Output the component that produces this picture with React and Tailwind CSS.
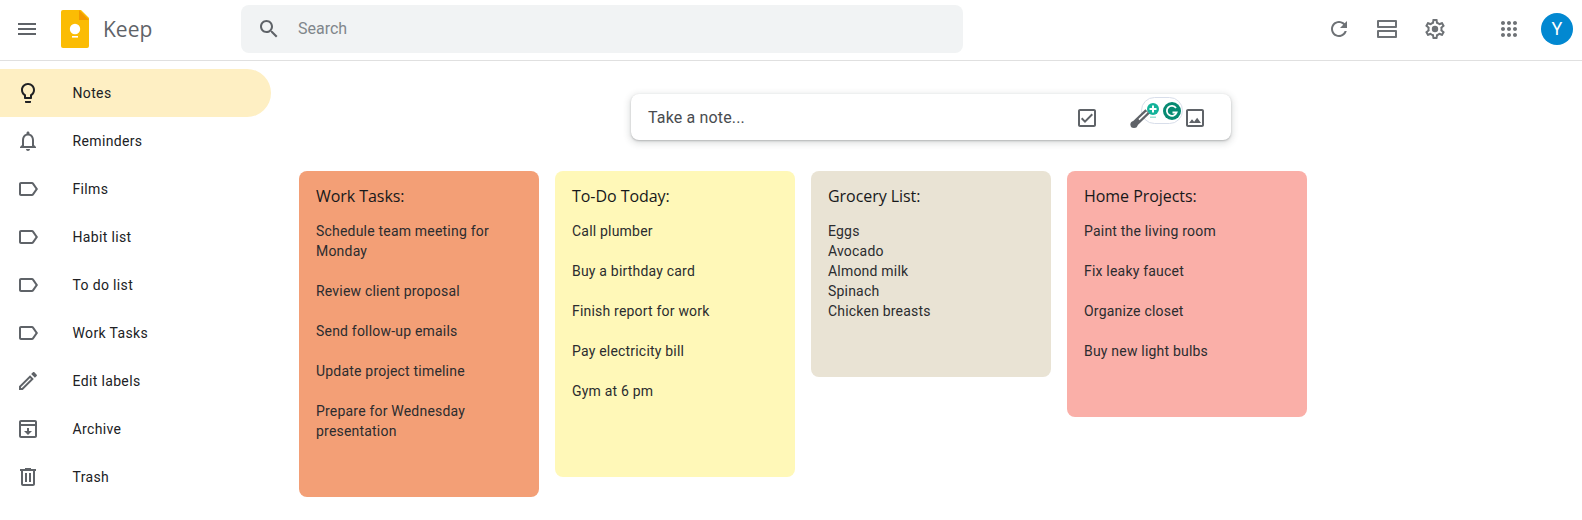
const P = {
  menu: "M3 18h18v-2H3v2zm0-5h18v-2H3v2zm0-7v2h18V6H3z",
  search: "M15.5 14h-.79l-.28-.27C15.41 12.59 16 11.11 16 9.5 16 5.91 13.09 3 9.5 3S3 5.91 3 9.5 5.91 16 9.5 16c1.61 0 3.09-.59 4.23-1.57l.27.28v.79l5 4.99L20.49 19l-4.99-5zm-6 0C7.01 14 5 11.99 5 9.5S7.01 5 9.5 5 14 7.01 14 9.5 11.99 14 9.5 14z",
  refresh: "M17.65 6.35C16.2 4.9 14.21 4 12 4c-4.42 0-7.99 3.58-7.99 8s3.57 8 7.99 8c3.73 0 6.84-2.55 7.73-6h-2.08c-.82 2.33-3.04 4-5.65 4-3.31 0-6-2.69-6-6s2.69-6 6-6c1.66 0 3.14.69 4.22 1.78L13 11h7V4l-2.35 2.35z",
  split: "M3 3h18a1 1 0 0 1 1 1v6a1 1 0 0 1-1 1H3a1 1 0 0 1-1-1V4a1 1 0 0 1 1-1zm1 2v4h16V5H4zM3 13h18a1 1 0 0 1 1 1v6a1 1 0 0 1-1 1H3a1 1 0 0 1-1-1v-6a1 1 0 0 1 1-1zm1 2v4h16v-4H4z",
  gear: "M19.43 12.98c.04-.32.07-.64.07-.98s-.03-.66-.07-.98l2.11-1.65c.19-.15.24-.42.12-.64l-2-3.46c-.12-.22-.39-.3-.61-.22l-2.49 1c-.52-.4-1.08-.73-1.69-.98l-.38-2.65C14.46 2.18 14.25 2 14 2h-4c-.25 0-.46.18-.49.42l-.38 2.65c-.61.25-1.17.59-1.69.98l-2.49-1c-.23-.09-.49 0-.61.22l-2 3.46c-.13.22-.07.49.12.64l2.11 1.65c-.04.32-.07.65-.07.98s.03.66.07.98l-2.11 1.65c-.19.15-.24.42-.12.64l2 3.46c.12.22.39.3.61.22l2.49-1c.52.4 1.08.73 1.69.98l.38 2.65c.03.24.24.42.49.42h4c.25 0 .46-.18.49-.42l.38-2.65c.61-.25 1.17-.59 1.69-.98l2.49 1c.23.09.49 0 .61-.22l2-3.46c.12-.22.07-.49-.12-.64l-2.11-1.65zm-1.98-1.71c.04.31.05.52.05.73 0 .21-.02.43-.05.73l-.14 1.13.89.7 1.08.84-.7 1.21-1.27-.51-1.04-.42-.9.68c-.43.32-.84.56-1.25.73l-1.06.43-.16 1.13-.2 1.35h-1.4l-.19-1.35-.16-1.13-1.06-.43c-.43-.18-.83-.41-1.23-.71l-.91-.7-1.06.43-1.27.51-.7-1.21 1.08-.84.89-.7-.14-1.13c-.03-.31-.05-.54-.05-.74s.02-.43.05-.73l.14-1.13-.89-.7-1.08-.84.7-1.21 1.27.51 1.04.42.9-.68c.43-.32.84-.56 1.25-.73l1.06-.43.16-1.13.2-1.35h1.39l.19 1.35.16 1.13 1.06.43c.43.18.83.41 1.23.71l.91.7 1.06-.43 1.27-.51.7 1.21-1.07.85-.89.7.14 1.13z",
  bulb: "M9 21c0 .55.45 1 1 1h4c.55 0 1-.45 1-1v-1H9v1zm3-19C8.14 2 5 5.14 5 9c0 2.38 1.19 4.47 3 5.74V17c0 .55.45 1 1 1h6c.55 0 1-.45 1-1v-2.26c1.81-1.27 3-3.36 3-5.74 0-3.86-3.14-7-7-7zm2.85 11.1l-.85.6V16h-4v-2.3l-.85-.6C7.8 12.16 7 10.63 7 9c0-2.76 2.24-5 5-5s5 2.24 5 5c0 1.63-.8 3.16-2.15 4.1z",
  bell: "M12 22c1.1 0 2-.9 2-2h-4c0 1.1.9 2 2 2zm6-6v-5c0-3.07-1.63-5.64-4.5-6.32V4c0-.83-.67-1.5-1.5-1.5s-1.5.67-1.5 1.5v.68C7.64 5.36 6 7.92 6 11v5l-2 2v1h16v-1l-2-2zm-2 1H8v-6c0-2.48 1.51-4.5 4-4.5s4 2.02 4 4.5v6z",
  label: "M17.63 5.84C17.27 5.33 16.67 5 16 5L5 5.01C3.9 5.01 3 5.9 3 7v10c0 1.1.9 1.99 2 1.99L16 19c.67 0 1.27-.33 1.63-.84L22 12l-4.37-6.16zM16 17H5V7h11l3.55 5L16 17z",
  edit: "M14.06 9.02l.92.92L5.92 19H5v-.92l9.06-9.06M17.66 3c-.25 0-.51.1-.7.29l-1.83 1.83 3.75 3.75 1.83-1.83c.39-.39.39-1.02 0-1.41l-2.34-2.34c-.2-.2-.45-.29-.71-.29zm-3.6 3.19L3 17.25V21h3.75L17.81 9.94l-3.75-3.75z",
  archive: "M19 3H5c-1.1 0-2 .9-2 2v14c0 1.1.9 2 2 2h14c1.1 0 2-.9 2-2V5c0-1.1-.9-2-2-2zm0 2v2H5V5h14zM5 19V9h14v10H5zm7-1l4-4h-3v-3h-2v3H8l4 4z",
  trash: "M15 4V3H9v1H4v2h1v13c0 1.1.9 2 2 2h10c1.1 0 2-.9 2-2V6h1V4h-5zm2 15H7V6h10v13zM9 8h2v9H9zm4 0h2v9h-2z",
  check: "M19 3H5c-1.1 0-2 .9-2 2v14c0 1.1.9 2 2 2h14c1.1 0 2-.9 2-2V5c0-1.1-.9-2-2-2zm0 16H5V5h14v14zM17.99 9l-1.41-1.42-6.59 6.59-2.58-2.56-1.42 1.41 4 3.98z",
  image: "M19 5v14H5V5h14m0-2H5c-1.1 0-2 .9-2 2v14c0 1.1.9 2 2 2h14c1.1 0 2-.9 2-2V5c0-1.1-.9-2-2-2zm-4.86 8.86l-3 3.87L9 13.14 6 17h12l-3.86-5.14z",
  apps: "M6 8c1.1 0 2-.9 2-2s-.9-2-2-2-2 .9-2 2 .9 2 2 2zm6 12c1.1 0 2-.9 2-2s-.9-2-2-2-2 .9-2 2 .9 2 2 2zm-6 0c1.1 0 2-.9 2-2s-.9-2-2-2-2 .9-2 2 .9 2 2 2zm0-6c1.1 0 2-.9 2-2s-.9-2-2-2-2 .9-2 2 .9 2 2 2zm6 0c1.1 0 2-.9 2-2s-.9-2-2-2-2 .9-2 2 .9 2 2 2zm6-6c1.1 0 2-.9 2-2s-.9-2-2-2-2 .9-2 2 .9 2 2 2zm-6 0c1.1 0 2-.9 2-2s-.9-2-2-2-2 .9-2 2 .9 2 2 2zm6 6c1.1 0 2-.9 2-2s-.9-2-2-2-2 .9-2 2 .9 2 2 2zm0 6c1.1 0 2-.9 2-2s-.9-2-2-2-2 .9-2 2 .9 2 2 2z",
};

function Icon({ d, className = "w-6 h-6 text-[#5f6368]", children }) {
  return (
    <svg viewBox="0 0 24 24" fill="currentColor" className={className}>
      <path d={d} />
      {children}
    </svg>
  );
}

const nav = [
  ["Notes", P.bulb],
  ["Reminders", P.bell],
  ["Films", P.label],
  ["Habit list", P.label],
  ["To do list", P.label],
  ["Work Tasks", P.label],
  ["Edit labels", P.edit],
  ["Archive", P.archive],
  ["Trash", P.trash],
];

const notes = [
  { title: "Work Tasks:", bg: "bg-[#f39f76]", lines: ["Schedule team meeting for Monday", "", "Review client proposal", "", "Send follow-up emails", "", "Update project timeline", "", "Prepare for Wednesday presentation"] },
  { title: "To-Do Today:", bg: "bg-[#fff8b8]", lines: ["Call plumber", "", "Buy a birthday card", "", "Finish report for work", "", "Pay electricity bill", "", "Gym at 6 pm", ""] },
  { title: "Grocery List:", bg: "bg-[#e9e3d4]", lines: ["Eggs", "Avocado", "Almond milk", "Spinach", "Chicken breasts"] },
  { title: "Home Projects:", bg: "bg-[#faafa8]", lines: ["Paint the living room", "", "Fix leaky faucet", "", "Organize closet", "", "Buy new light bulbs"] },
];

function Note({ title, bg, lines }) {
  return (
    <div className={`w-60 rounded-lg ${bg} pl-[17px] pr-4 pt-[15px] pb-[56px] text-[#202124]`}>
      <div className="h-[35px] text-[16px] leading-5 font-medium font-['Open_Sans',sans-serif] tracking-[-0.05px] text-[#17181a]">{title}</div>
      {lines.map((l, i) =>
        l ? (
          <div key={i} className="text-[14px] leading-5 tracking-[0.2px] text-[#2b2c2f]">{l}</div>
        ) : (
          <div key={i} className="h-5" />
        )
      )}
    </div>
  );
}

export default function App() {
  const top = "w-6 h-6 text-[#6e7276]";
  return (
    <div className="h-[520px] w-[1582px] overflow-hidden bg-white font-['Roboto',sans-serif]">
      <header className="flex h-[61px] items-center border-b border-[#e0e0e0] pb-[3px]">
        <div className="flex w-[241px] items-center">
          <div className="flex w-[54px] justify-center">
            <Icon d={P.menu} />
          </div>
          <svg viewBox="0 0 28 38" className="ml-[7px] h-[38px] w-[28px]">
            <path d="M2 0h18l8 8v28a2 2 0 0 1-2 2H2a2 2 0 0 1-2-2V2a2 2 0 0 1 2-2z" fill="#fbbc04" />
            <path d="M18 0l10 10h-10z" fill="#f29900" />
            <circle cx="14" cy="19" r="5.2" fill="#fff" />
            <rect x="11" y="26" width="6" height="1.6" fill="#fff" />
          </svg>
          <span className="ml-[14px] text-[21px] font-medium leading-7 text-[#5f6368] font-['Open_Sans',sans-serif]">Keep</span>
        </div>
        <div className="flex h-12 w-[722px] items-center rounded-lg bg-[#f1f3f4] pl-4">
          <Icon d={P.search} />
          <span className="ml-[17px] text-[16px] text-[#80868b]">Search</span>
        </div>
        <div className="ml-[364px] flex items-center">
          <Icon d={P.refresh} className={top} />
          <div className="ml-6"><Icon d={P.split} className={top} /></div>
          <div className="ml-6">
            <Icon d={P.gear} className={top}>
              <circle cx="12" cy="12" r="3.2" />
            </Icon>
          </div>
          <div className="ml-[50px]"><Icon d={P.apps} className={top} /></div>
          <div className="ml-[20px] flex h-8 w-8 items-center justify-center rounded-full bg-[#0288d1] text-[18px] text-white">Y</div>
        </div>
      </header>
      <div className="flex">
        <nav className="w-[280px] shrink-0 pt-2">
          {nav.map(([name, d], i) => (
            <div key={name} className={`flex h-12 w-[271px] items-center rounded-r-3xl pl-4 ${i === 0 ? "bg-[#feefc3]" : ""}`}>
              <Icon d={d} className={i === 0 ? "w-6 h-6 text-[#202124]" : "w-6 h-6 text-[#5f6368]"} />
              <span className="ml-[32.5px] text-[14px] font-[450] tracking-[0.35px] text-[#202124]">{name}</span>
            </div>
          ))}
        </nav>
        <main className="flex-1 pt-[33px]">
          <div className="mx-auto flex h-[46px] w-[600px] items-center justify-between rounded-lg bg-white pl-[17px] pr-6 pt-[2px] shadow-[0_1px_2px_0_rgba(60,64,67,0.3),0_2px_6px_2px_rgba(60,64,67,0.15)]">
            <span className="text-[16px] tracking-[0.15px] text-[#494c50]">Take a note...</span>
            <div className="flex items-center">
              <Icon d={P.check} />
              <div className="relative ml-[30px] h-6 w-6">
                <span className="absolute left-[12px] top-[-9px] flex h-[27px] w-[42px] items-center rounded-full border border-[#d8deea] bg-white">
                  <svg viewBox="0 0 16 18" className="ml-[3px] h-[18px] w-4">
                    <circle cx="8" cy="7" r="6" fill="#13b39a" />
                    <path d="M8 3.5v7M4.5 7h7" stroke="#fff" strokeWidth="2" />
                    <rect x="5" y="14.5" width="6" height="1.5" fill="#9fe3d5" />
                  </svg>
                  <svg viewBox="0 0 18 18" className="ml-[2px] h-[18px] w-[18px]">
                    <circle cx="9" cy="9" r="9" fill="#078a72" />
                    <path d="M13 6a5 5 0 1 0 .6 4.5H9.5" fill="none" stroke="#fff" strokeWidth="1.8" />
                  </svg>
                </span>
                <svg viewBox="0 0 24 24" className="absolute left-0 top-0 h-6 w-6 overflow-visible">
                  <circle cx="5" cy="18.5" r="3.6" fill="#5f6368" />
                  <path d="M6 17.5L18.5 5.5" stroke="#5f6368" strokeWidth="6" />
                  <path d="M10 13.6L18 6" stroke="#fff" strokeWidth="1.6" />
                </svg>
              </div>
              <div className="relative z-10 ml-[30px]"><Icon d={P.image} /></div>
            </div>
          </div>
          <div className="mt-[31px] flex items-start gap-4 pl-[19px]">
            {notes.map((n) => (
              <Note key={n.title} {...n} />
            ))}
          </div>
        </main>
      </div>
    </div>
  );
}
